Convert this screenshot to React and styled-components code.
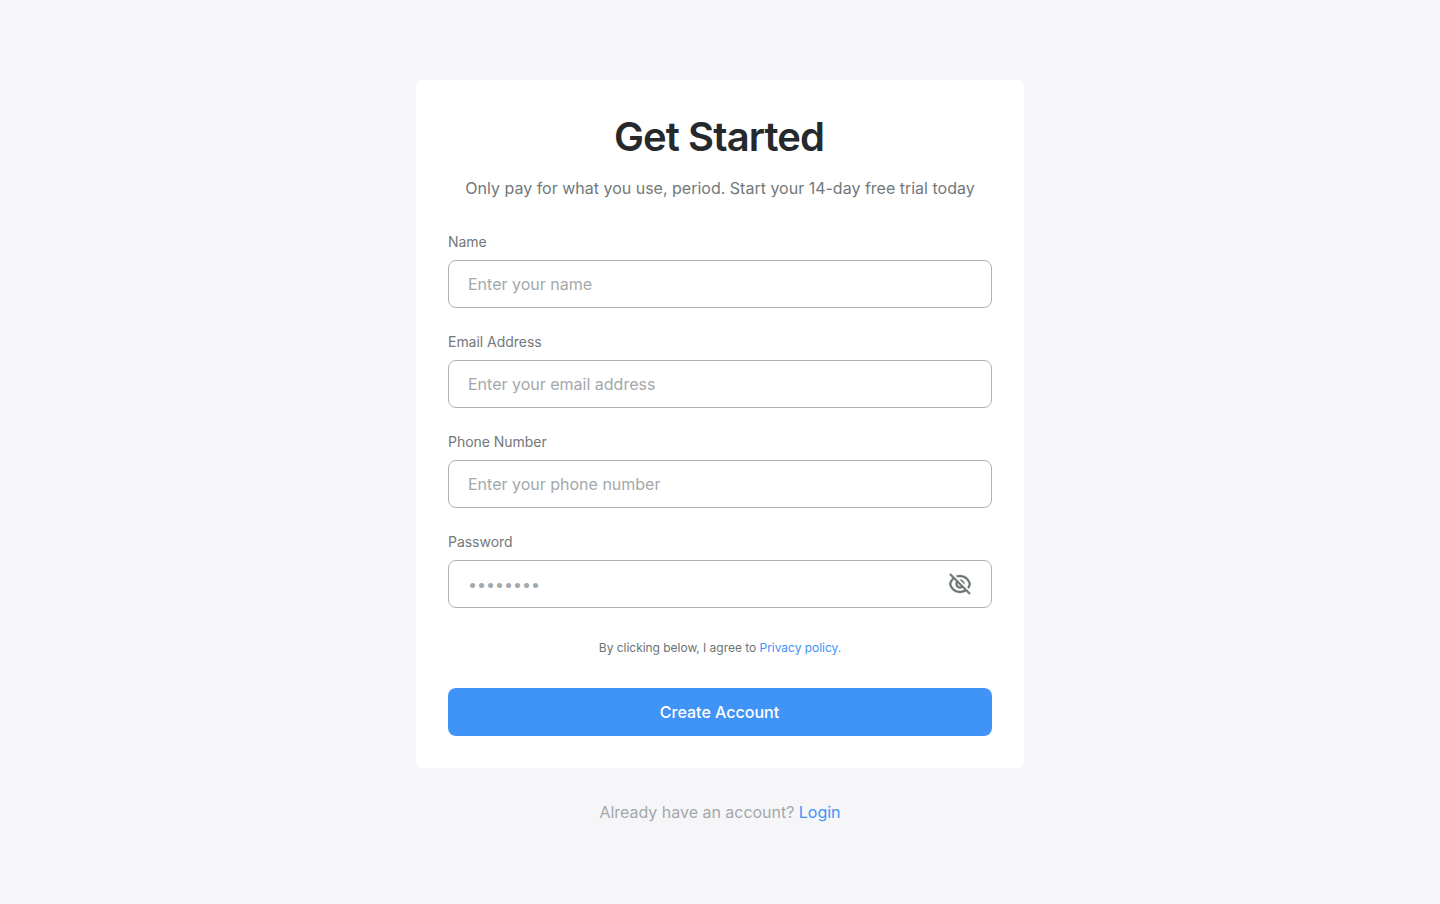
import React from "react";
import styled, { createGlobalStyle } from "styled-components";
import { RiEyeOffLine } from "react-icons/ri";

const GlobalStyle = createGlobalStyle`
  * {
    box-sizing: border-box;
  }

  body {
    margin: 0;
    background-color: #f6f6f8;
    font-family: Inter, "Liberation Sans", sans-serif;
  }
`;

const Page = styled.main`
  min-height: 100vh;
  padding: 80px 0;
  display: flex;
  flex-direction: column;
  align-items: center;
`;

const Card = styled.form`
  width: 608px;
  padding: 32px;
  display: flex;
  flex-direction: column;
  border-radius: 6px;
  background-color: #fff;
`;

const Title = styled.h1`
  margin: 0 0 14px;
  padding-right: 2px;
  font-size: 40px;
  line-height: 50px;
  font-weight: 600;
  letter-spacing: -0.0225em;
  text-align: center;
  color: #25292b;
`;

const Subtitle = styled.p`
  margin: 0 0 32px;
  font-size: 16px;
  line-height: 24px;
  text-align: center;
  color: #72787b;
`;

const Fields = styled.div`
  display: flex;
  flex-direction: column;
  gap: 24px;
`;

const FieldLabel = styled.label`
  display: flex;
  flex-direction: column;
  gap: 8px;
  font-size: 14px;
  line-height: 20px;
  letter-spacing: -0.03px;
  color: #72787b;
`;

const InputBox = styled.div`
  height: 48px;
  padding: 0 19px;
  display: flex;
  align-items: center;
  border: 1px solid #b0b4b6;
  border-radius: 8px;
`;

const Input = styled.input`
  flex: 1;
  min-width: 0;
  height: 24px;
  padding: 0;
  border: 0;
  outline: 0;
  background: transparent;
  font-family: inherit;
  font-size: 16px;
  color: #25292b;

  &::placeholder {
    color: #a3a8aa;
    opacity: 1;
  }
`;

const EyeButton = styled.button`
  width: 24px;
  height: 24px;
  padding: 0;
  display: flex;
  border: 0;
  background: none;
  color: #6c7275;
  cursor: pointer;

  svg {
    stroke-width: 0.3;
  }
`;

const Terms = styled.p`
  margin: 32px 0;
  font-size: 12px;
  line-height: 16px;
  letter-spacing: -0.03px;
  text-align: center;
  color: #6c7275;
`;

const Link = styled.a`
  color: #3f93f8;
  text-decoration: none;
`;

const SubmitButton = styled.button`
  height: 48px;
  padding: 0 7px 0 6px;
  border: 0;
  border-radius: 8px;
  background-color: #4094f7;
  font-family: inherit;
  font-size: 16px;
  font-weight: 500;
  color: #fff;
  cursor: pointer;
`;

const Footer = styled.p`
  margin: 32px 0 0;
  font-size: 16px;
  line-height: 24px;
  letter-spacing: -0.02px;
  color: #a3a8aa;
`;

function Field({ label, type = "text", placeholder, children }) {
  return (
    <FieldLabel>
      {label}
      <InputBox>
        <Input type={type} placeholder={placeholder} />
        {children}
      </InputBox>
    </FieldLabel>
  );
}

export default function App() {
  return (
    <>
      <GlobalStyle />
      <Page>
        <Card>
          <Title>Get Started</Title>
          <Subtitle>
            Only pay for what you use, period. Start your 14-day free trial today
          </Subtitle>
          <Fields>
            <Field label="Name" placeholder="Enter your name" />
            <Field
              label="Email Address"
              type="email"
              placeholder="Enter your email address"
            />
            <Field
              label="Phone Number"
              type="tel"
              placeholder="Enter your phone number"
            />
            <Field label="Password" type="password" placeholder="••••••••">
              <EyeButton type="button" aria-label="Show password">
                <RiEyeOffLine size={24} />
              </EyeButton>
            </Field>
          </Fields>
          <Terms>
            By clicking below, I agree to <Link href="#">Privacy policy.</Link>
          </Terms>
          <SubmitButton type="submit">Create Account</SubmitButton>
        </Card>
        <Footer>
          Already have an account? <Link href="#">Login</Link>
        </Footer>
      </Page>
    </>
  );
}
